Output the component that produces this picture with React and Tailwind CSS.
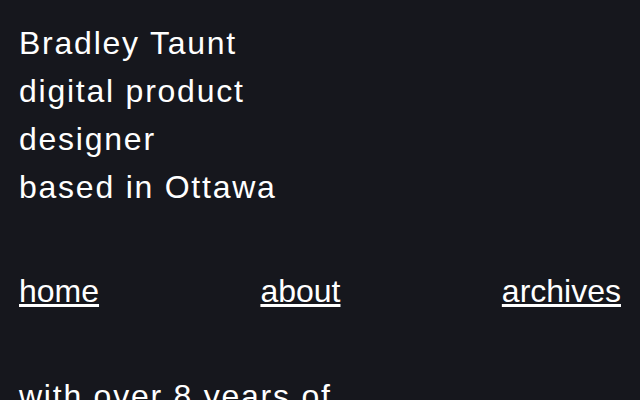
export default function App() {
  return (
    <div className="min-h-screen bg-[#16171d] text-white px-[19px] pt-[19px] font-['Liberation_Sans',Arial,sans-serif]">
      <header className="text-[32px] leading-[48px] tracking-[0.055em]">
        <h1>Bradley Taunt</h1>
        <p>digital product</p>
        <p>designer</p>
        <p>based in Ottawa</p>
      </header>

      <nav className="mt-[56px] flex justify-between text-[32px] leading-[48px]">
        <a href="#" className="underline">home</a>
        <a href="#" className="underline">about</a>
        <a href="#" className="underline">archives</a>
      </nav>

      <main className="mt-[57px] text-[32px] leading-[48px] tracking-[0.055em]">
        <p>with over 8 years of</p>
      </main>
    </div>
  );
}
